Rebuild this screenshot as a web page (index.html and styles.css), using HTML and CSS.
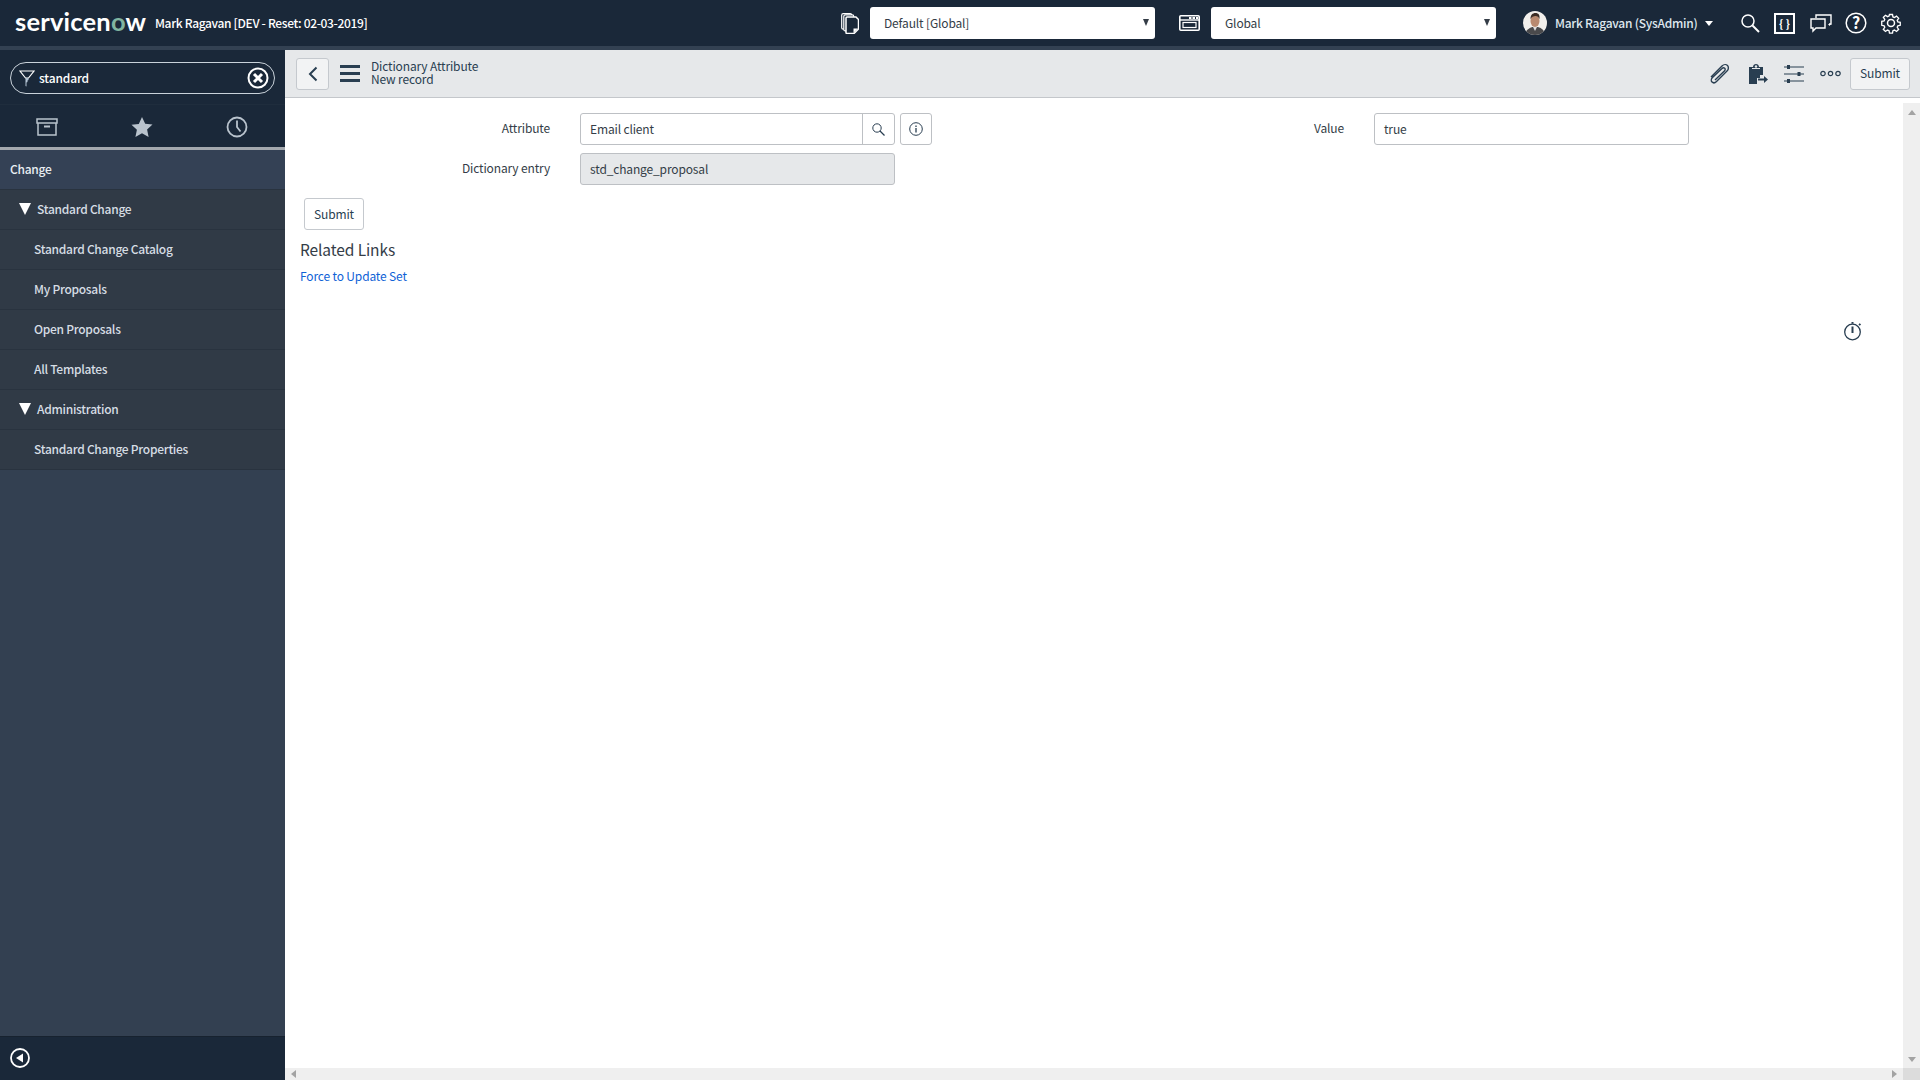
FILE: index.html
```html
<!DOCTYPE html>
<html lang="en">
<head>
<meta charset="utf-8">
<title>Dictionary Attribute - New record</title>
<link rel="stylesheet" href="styles.css">
</head>
<body>
<div class="app">
  <header class="topbar">
    <div class="brand"><span class="logo">servicen<span class="logo-o">o</span>w</span><span class="instance">Mark Ragavan [DEV - Reset: 02-03-2019]</span></div>
    <div class="pickers">
      <svg class="picker-icon" width="18" height="21" viewBox="0 0 18 21" fill="none"><rect x=".7" y=".7" width="10" height="15.500" rx="1.500" stroke="#fff" stroke-width="1.200"/><rect x="2.800" y="1.900" width="10" height="16" rx="1.500" fill="#1a2839" stroke="#fff" stroke-width="1.200"/><path d="M6 4h9l2.500 2.500v9.500l-4.500 4.500H6a1 1 0 0 1-1-1V5a1 1 0 0 1 1-1z" fill="#1a2839" stroke="#fff" stroke-width="1.500"/><path d="M12.500 20v-4.500H17z" fill="#fff"/></svg>
      <div class="select"><span>Default [Global]</span><i class="arrow"></i></div>
      <svg class="picker-icon pi2" width="21" height="16" viewBox="0 0 21 16" fill="none" stroke="#fff"><rect x=".8" y=".8" width="19.400" height="14.400" rx="1" stroke-width="1.600"/><path d="M1 5h19" stroke-width="1.400"/><path d="M10 3h2.500M13.500 3H16M17 3h2" stroke-width="2"/><rect x="4" y="7.500" width="13" height="5" stroke-width="1.200"/></svg>
      <div class="select"><span>Global</span><i class="arrow"></i></div>
    </div>
    <div class="user">
      <svg class="avatar" width="24" height="24" viewBox="0 0 24 24"><defs><clipPath id="av"><circle cx="12" cy="12" r="12"/></clipPath></defs><g clip-path="url(#av)"><rect width="24" height="24" fill="#f1efec"/><path d="M2 24c1-6 5-7 7-8h6c3 1 6 2 7 8z" fill="#4a4a4c"/><path d="M10 16l2 4 2-4z" fill="#ddd"/><ellipse cx="12" cy="10" rx="4.500" ry="6" fill="#b98a70"/><path d="M7.500 8c0-4 2-6 5-6s4.500 2 4 6c-1-2-2-3-4-3s-4 1-5 3z" fill="#3b2c25"/></g></svg>
      <span class="user-name">Mark Ragavan (SysAdmin)</span><i class="caret"></i>
    </div>
    <nav class="top-tools">
      <svg width="20" height="20" viewBox="0 0 20 20" fill="none" stroke="#fff" stroke-width="1.500"><circle cx="8" cy="8" r="6"/><path d="M12.500 12.500L19 19" stroke-width="2"/></svg>
      <span class="braces">{ }</span>
      <svg class="chat" width="22" height="20" viewBox="0 0 22 20" fill="none" stroke="#fff" stroke-width="1.400"><path d="M6 5V2h15v9h-2"/><path d="M1 6h14v9H6l-3 3v-3H1z" fill="#1a2839"/><path d="M18 11l1.500 2 1.500-2" fill="#fff" stroke="none"/></svg>
      <svg width="22" height="22" viewBox="0 0 22 22"><circle cx="11" cy="11" r="9.800" fill="none" stroke="#fff" stroke-width="1.500"/><text x="11" y="16.500" text-anchor="middle" class="help-q">?</text></svg>
      <svg class="gear" width="22" height="22" viewBox="0 0 22 22" fill="none" stroke="#fff" stroke-width="1.500"><path d="M9.300 1.500h3.400l.5 2.700 1.700.7 2.300-1.600 2.400 2.400-1.600 2.300.7 1.700 2.700.5v3.400l-2.700.5-.7 1.700 1.600 2.300-2.400 2.400-2.300-1.600-1.700.7-.5 2.700H9.300l-.5-2.700-1.700-.7-2.300 1.600-2.400-2.400 1.600-2.300-.7-1.700-2.700-.5V9.200l2.700-.5.7-1.700-1.600-2.300 2.400-2.400 2.300 1.600 1.700-.7z" transform="translate(1.200 1.200) scale(.89)"/><circle cx="11" cy="11" r="3.500"/></svg>
    </nav>
  </header>
  <div class="shell">
    <aside class="sidebar">
      <div class="filter-wrap">
        <div class="filter">
          <svg class="funnel" width="16" height="20" viewBox="0 0 16 20" fill="none"><path d="M1 1h14L9.500 8H6.500z" stroke="#fff" stroke-width="1.200"/><path d="M6.500 8h3v2l-1 .5v1.500l-1 .5v4l-1-.5z" fill="#b6c6d6"/></svg>
          <span class="filter-text">standard</span>
          <svg class="filter-x" width="22" height="22" viewBox="0 0 22 22"><circle cx="11" cy="11" r="9.500" fill="none" stroke="#fff" stroke-width="2"/><path d="M7 7l8 8M15 7l-8 8" stroke="#fff" stroke-width="3"/></svg>
        </div>
      </div>
      <div class="tabs">
        <svg width="22" height="18" viewBox="0 0 22 18" fill="none" stroke="#b9c3cd" stroke-width="1.500"><path d="M1 1h20v4H1zM2 5v12h18V5"/><path d="M8 8.500h6" stroke-width="2"/></svg>
        <svg width="22" height="20" viewBox="0 0 22 20"><path d="M11 0l3.200 6.800 7.300.8-5.400 5 1.500 7.300L11 16.300 4.400 20l1.500-7.300-5.400-5 7.300-.8z" fill="#b9c3cd"/></svg>
        <svg width="22" height="22" viewBox="0 0 22 22" fill="none" stroke="#b9c3cd" stroke-width="1.800"><circle cx="11" cy="11" r="9.500"/><path d="M11 4.500V11l3.500 4.500"/></svg>
      </div>
      <ul class="menu">
        <li class="menu-app">Change</li>
        <li class="menu-sec"><i class="tri"></i>Standard Change</li>
        <li class="menu-item">Standard Change Catalog</li>
        <li class="menu-item">My Proposals</li>
        <li class="menu-item">Open Proposals</li>
        <li class="menu-item">All Templates</li>
        <li class="menu-sec"><i class="tri"></i>Administration</li>
        <li class="menu-item">Standard Change Properties</li>
      </ul>
      <div class="side-foot">
        <svg width="20" height="20" viewBox="0 0 20 20"><circle cx="10" cy="10" r="9" fill="none" stroke="#fff" stroke-width="1.800"/><path d="M13 5.500v9L6 10z" fill="#fff"/></svg>
      </div>
    </aside>
    <main class="main">
      <div class="toolbar">
        <button class="back"><svg width="10" height="16" viewBox="0 0 10 16" fill="none" stroke="#293e51" stroke-width="2"><path d="M8.500 1.500L2 8l6.500 6.500"/></svg></button>
        <div class="burger"><i></i><i></i><i></i></div>
        <div class="titles"><div>Dictionary Attribute</div><div>New record</div></div>
        <div class="tool-icons">
          <svg class="clip" width="22" height="22" viewBox="0 0 22 22" fill="none" stroke="#293e51" stroke-width="1.400"><path d="M3 14L14 3c2-2 4.500-1.500 5.500-.5s1.500 3.500-.5 5.500L8.500 18.500c-1.500 1.500-3.500 1.500-4.500.5s-1-3 .5-4.500L14 5.500c1-1 2-1 2.700-.3s.7 1.800-.3 2.800L7 17"/></svg>
          <svg width="20" height="20" viewBox="0 0 20 20"><path d="M1 3h4c0-2 1.500-3 3-3s3 1 3 3h4v8h-3v3H9v6H1z" fill="#293e51"/><circle cx="8" cy="2.500" r="1.200" fill="#e6e8ea"/><path d="M4 4.500h8" stroke="#e6e8ea"/><path d="M10 14.500h6V12l4 3.500-4 3.500v-2.500h-6z" fill="#293e51"/></svg>
          <svg width="20" height="20" viewBox="0 0 20 20" stroke="#293e51"><path d="M0 3h20M0 10h20M0 17h20" stroke-width="1.200"/><path d="M6 3h-3M16.500 10h-3M6 17H3" stroke-width="4"/></svg>
          <svg width="21" height="7" viewBox="0 0 21 7" fill="none" stroke="#293e51" stroke-width="1.200"><circle cx="3" cy="3.500" r="2.200"/><circle cx="10.500" cy="3.500" r="2.200"/><circle cx="18" cy="3.500" r="2.200"/></svg>
        </div>
        <button class="btn btn-top">Submit</button>
      </div>
      <div class="work">
        <div class="pane">
          <svg class="timer" width="18" height="21" viewBox="0 0 18 21" fill="none" stroke="#293e51" stroke-width="1.300"><circle cx="8.500" cy="12" r="7.800"/><path d="M8.500 2v1.800M15 4l1.500 1" stroke-width="2"/><path d="M8.500 6.500V13" stroke-width="2"/></svg>
          <form class="form">
            <div class="form-left">
              <div class="field">
                <label class="lbl lbl-left">Attribute</label>
                <div class="lookup"><span class="lookup-value">Email client</span><span class="lookup-btn"><svg width="13" height="13" viewBox="0 0 13 13" fill="none" stroke="#293e51"><circle cx="5" cy="5" r="4.200"/><path d="M8 8l4.500 4.500" stroke-width="1.300"/></svg></span></div>
                <span class="info"><svg width="14" height="14" viewBox="0 0 14 14"><circle cx="7" cy="7" r="6.300" fill="none" stroke="#293e51"/><path d="M7 6v4.500M7 3.500v1.500" stroke="#293e51" stroke-width="1.300"/></svg></span>
              </div>
              <div class="field">
                <label class="lbl lbl-left">Dictionary entry</label>
                <div class="readonly">std_change_proposal</div>
              </div>
            </div>
            <div class="form-right">
              <div class="field">
                <label class="lbl lbl-right">Value</label>
                <div class="text-input">true</div>
              </div>
            </div>
          </form>
          <div class="form-actions"><button class="btn btn-form" type="button">Submit</button></div>
          <h2 class="related">Related Links</h2>
          <a class="link" href="#">Force to Update Set</a>
        </div>
        <div class="vscroll"><i class="up"></i><i class="down"></i></div>
        <div class="hscroll"><i class="left"></i><i class="right"></i></div>
        <div class="corner"></div>
      </div>
    </main>
  </div>
</div>
</body>
</html>
```

FILE: styles.css
```css
* { box-sizing: border-box; }
html, body { height: 100%; margin: 0; overflow: hidden; }
body { font-family: "Noto Sans CJK SC", "Noto Sans CJK JP", "Noto Sans", sans-serif; font-size: 12px; letter-spacing: -.15px; color: #343d47; background: #fff; }
.app { height: 1080px; display: flex; flex-direction: column; }

.topbar { height: 50px; flex: none; display: flex; align-items: center; background: #1a2839; border-bottom: 4px solid #334152; color: #fff; }
.brand { display: flex; align-items: center; width: 835px; padding-left: 15px; }
.logo { font-family: "Lato", sans-serif; font-weight: 700; font-size: 25.500px; letter-spacing: .2px; line-height: 30px; width: 140px; margin-top: -4px; flex: none; }
.logo-o { color: #81b5a1; }
.instance { font-weight: 500; white-space: nowrap; letter-spacing: -.34px; padding-bottom: 1px; }
.pickers { display: flex; align-items: center; width: 660px; }
.picker-icon { margin-left: 6px; margin-right: 11px; flex: none; }
.pi2 { margin-left: 24px; margin-right: 11px; }
.select { width: 285px; height: 32px; flex: none; background: #fff; border-radius: 3px; color: #343d47; display: flex; align-items: center; justify-content: space-between; padding: 0 6px 1px 14px; }
.arrow { width: 0; height: 0; border-left: 3.500px solid transparent; border-right: 3.500px solid transparent; border-top: 7px solid #343d47; }
.user { display: flex; align-items: center; margin-left: 28px; width: 202px; }
.avatar { margin-right: 8px; flex: none; }
.user-name { font-weight: 500; color: #dfe7ee; white-space: nowrap; letter-spacing: -.26px; padding-bottom: 1px; }
.caret { width: 0; height: 0; margin-left: 8px; border-left: 4.500px solid transparent; border-right: 4.500px solid transparent; border-top: 5px solid #fff; }
.top-tools { display: flex; align-items: center; gap: 14px; margin-left: 15px; }
.chat { margin-left: 1px; margin-right: -1px; }
.gear { margin-left: -1px; }
.braces { width: 21px; height: 21px; border: 2px solid #fff; font-size: 11px; font-weight: 700; letter-spacing: 0; display: flex; align-items: center; justify-content: center; white-space: nowrap; }
.help-q { font-family: "Noto Sans CJK SC", sans-serif; font-size: 16px; font-weight: 700; fill: #fff; }

.shell { flex: 1; min-height: 0; display: flex; }
.sidebar { width: 285px; flex: none; display: flex; flex-direction: column; background: #334051; }
.filter-wrap { height: 55px; background: #1a2839; padding: 12px 10px 0; border-bottom: 1px solid #1f2d3d; flex: none; }
.filter { height: 32px; border: 1px solid #c9d2da; border-radius: 16px; display: flex; align-items: center; padding: 0 5px 0 8px; color: #fff; }
.funnel { margin-top: 3px; }
.filter-text { flex: 1; margin-left: 4px; padding-bottom: 2px; font-weight: 500; }
.tabs { height: 45px; flex: none; background: #1a2839; border-bottom: 3px solid #a3a8ae; display: flex; align-items: center; justify-content: space-around; padding: 1px 1px 0 0; }
.menu { list-style: none; margin: 0; padding: 0; flex: 1; }
.menu li { height: 40px; display: flex; align-items: center; padding-bottom: 2px; border-bottom: 1px solid #29333f; color: #d6dde4; font-weight: 500; letter-spacing: -.27px; }
.menu-app { background: #344155; padding-left: 10px; color: #e8edf2 !important; }
.menu-sec { background: #303a46; padding-left: 19px; }
.menu-item { background: #303a46; padding-left: 34px; }
.tri { width: 0; height: 0; margin-right: 6px; border-left: 6.500px solid transparent; border-right: 6.500px solid transparent; border-top: 12px solid #fff; }
.side-foot { height: 44px; flex: none; background: #1a2839; border-top: 1px solid #17222f; display: flex; align-items: center; padding: 0 0 1px 10px; }

.main { flex: 1; min-width: 0; display: flex; flex-direction: column; }
.toolbar { height: 48px; flex: none; display: flex; align-items: center; background: #e6e8ea; border-bottom: 1px solid #c4c7cb; padding: 0 10px 0 11px; color: #293e51; }
.back { width: 33px; height: 32px; padding: 0; background: #f2f3f4; border: 1px solid #c5c9ce; border-radius: 3px; display: flex; align-items: center; justify-content: center; }
.burger { width: 20px; margin-left: 11px; display: flex; flex-direction: column; gap: 4px; }
.burger i { height: 3px; background: #293e51; display: block; }
.titles { margin-left: 11px; margin-bottom: 3px; line-height: 13.500px; color: #293e51; flex: 1; }
.tool-icons { display: flex; align-items: center; gap: 16px; margin-right: 9px; }
.clip { margin-right: 2px; }
.btn { font: inherit; letter-spacing: inherit; color: #293e51; background: #fff; border: 1px solid #c5c9ce; border-radius: 3px; padding: 0 0 2px; }
.btn-top { width: 60px; height: 32px; background: #f2f3f4; }
.btn-form { width: 60px; height: 32px; }

.work { flex: 1; min-height: 0; display: grid; grid-template-columns: 1fr 17px; grid-template-rows: 1fr 12px; padding-top: 5px; }
.pane { position: relative; padding: 10px 0 0 15px; }
.timer { position: absolute; right: 41px; top: 217px; }
.form { display: flex; margin-left: -15px; }
.form-left { width: 647px; display: flex; flex-direction: column; gap: 8px; flex: none; }
.form-right { flex: none; }
.field { display: flex; align-items: center; height: 32px; }
.lbl { text-align: right; flex: none; margin-right: 30px; padding-bottom: 4px; }
.lbl-left { width: 265px; }
.lbl-right { width: 412px; }
.lookup { width: 315px; height: 32px; flex: none; border: 1px solid #bdc0c4; border-radius: 3px; display: flex; align-items: center; }
.lookup-value { flex: 1; padding: 0 0 2px 9px; }
.lookup-btn { width: 32px; height: 100%; border-left: 1px solid #bdc0c4; display: flex; align-items: center; justify-content: center; }
.info { width: 32px; height: 32px; flex: none; margin-left: 5px; border: 1px solid #bdc0c4; border-radius: 3px; display: flex; align-items: center; justify-content: center; }
.readonly { width: 315px; height: 32px; background: #e6e8ea; border: 1px solid #bdc0c4; border-radius: 3px; padding: 0 0 2px 9px; display: flex; align-items: center; }
.text-input { width: 315px; height: 32px; border: 1px solid #bdc0c4; border-radius: 3px; padding: 0 0 2px 9px; display: flex; align-items: center; }
.form-actions { margin: 13px 0 0 4px; }
.related { margin: 7px 0 0; font-size: 15.500px; letter-spacing: -.1px; font-weight: 400; line-height: 24px; color: #343d47; }
.link { display: block; margin-top: 5px; color: #0f62d6; text-decoration: none; line-height: 20px; }

.vscroll { background: #efefef; display: flex; flex-direction: column; justify-content: space-between; align-items: center; padding: 7px 0 6px; }
.up { width: 0; height: 0; border-left: 4.500px solid transparent; border-right: 4.500px solid transparent; border-bottom: 5px solid #a3a3a3; }
.down { width: 0; height: 0; border-left: 4.500px solid transparent; border-right: 4.500px solid transparent; border-top: 5px solid #a3a3a3; }
.hscroll { background: #efefef; display: flex; justify-content: space-between; align-items: center; padding: 0 6px 0 6px; }
.left { width: 0; height: 0; border-top: 4.500px solid transparent; border-bottom: 4.500px solid transparent; border-right: 5px solid #a3a3a3; }
.right { width: 0; height: 0; border-top: 4.500px solid transparent; border-bottom: 4.500px solid transparent; border-left: 5px solid #a3a3a3; }
.corner { background: #dcdcdc; }
```
